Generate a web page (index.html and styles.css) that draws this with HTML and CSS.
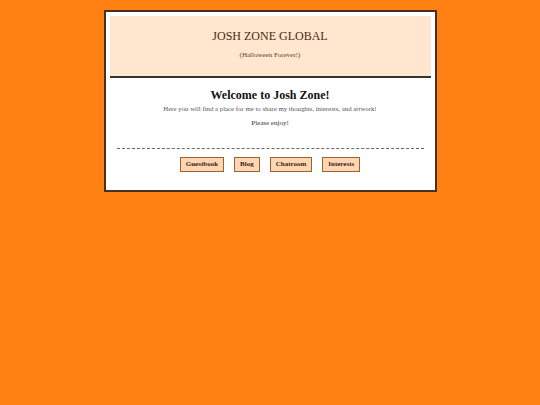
FILE: index.html
```html
<!DOCTYPE html>
<html>
<head>
<meta charset="utf-8">
<link rel="stylesheet" href="styles.css">
</head>
<body>
<div class="page">
  <div class="header">
    <h1 class="title">JOSH ZONE GLOBAL</h1>
    <p class="tagline">(Halloween Forever!)</p>
  </div>
  <div class="main">
    <h2 class="welcome">Welcome to Josh Zone!</h2>
    <p class="intro">Here you will find a place for me to share my thoughts, interests, and artwork!</p>
    <p class="enjoy">Please enjoy!</p>
  </div>
  <div class="nav">
    <a class="btn">Guestbook</a>
    <a class="btn">Blog</a>
    <a class="btn">Chatroom</a>
    <a class="btn">Interests</a>
  </div>
</div>
</body>
</html>
```

FILE: styles.css
```css
html, body {
  margin: 0;
  padding: 0;
}
body {
  background: #ff8114;
  font-family: "Liberation Serif", "Times New Roman", serif;
  padding-top: 10px;
}
.page {
  box-sizing: border-box;
  width: 333px;
  margin: 0 auto;
  background: #ffffff;
  border: 2px solid #4a2f1e;
  padding: 4px 4px 18px 4px;
}
.header {
  background: #ffe6cf;
  border-bottom: 2px solid #333333;
  height: 60px;
  text-align: center;
}
.title {
  margin: 0;
  padding-top: 13px;
  font-size: 12px;
  font-weight: normal;
  line-height: 15px;
  color: #4a2a12;
}
.tagline {
  margin: 0;
  padding-top: 7px;
  font-size: 7px;
  line-height: 9px;
  color: #5a3a20;
}
.main {
  text-align: center;
  padding: 0 7px;
}
.welcome {
  margin: 0;
  padding-top: 10px;
  font-size: 12px;
  line-height: 15px;
  font-weight: bold;
  color: #111111;
}
.intro {
  margin: 0;
  padding-top: 1px;
  font-size: 6.8px;
  line-height: 9px;
  color: #555555;
}
.enjoy {
  margin: 0;
  padding-top: 6px;
  font-size: 7px;
  line-height: 9px;
  color: #333333;
}
.nav {
  margin: 20px 7px 0 7px;
  border-top: 1px dashed #666666;
  padding-top: 8px;
  display: flex;
  justify-content: center;
  gap: 10px;
}
.btn {
  display: block;
  background: #ffd6b3;
  border: 1px solid #a0602a;
  padding: 2px 5px;
  font-size: 7px;
  line-height: 9px;
  font-weight: bold;
  color: #3a2010;
}
```
